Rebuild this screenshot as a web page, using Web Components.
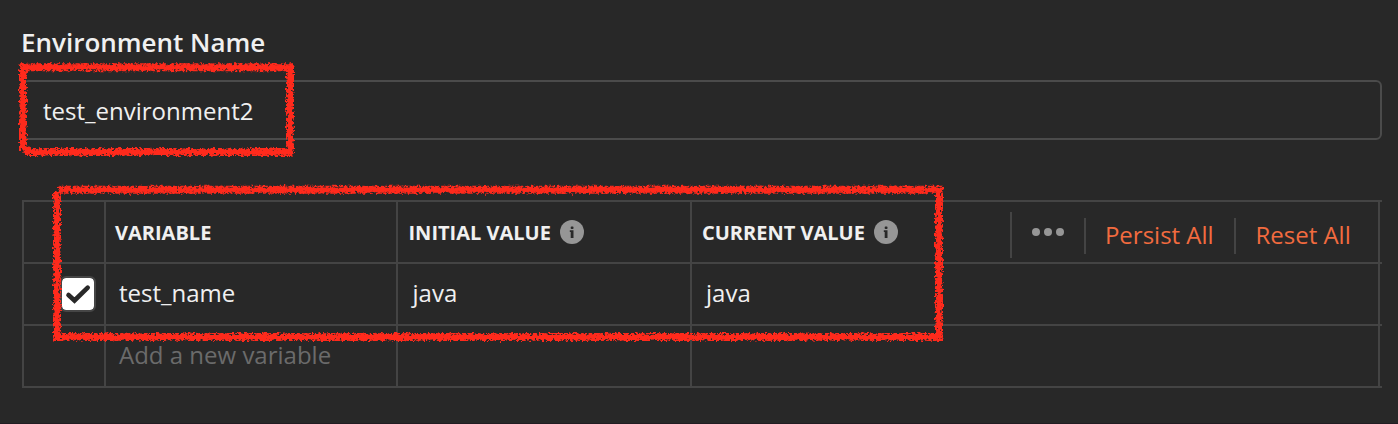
<!DOCTYPE html>
<html lang="en">
<head>
<meta charset="utf-8">
<title>Environment</title>
<style>
html,body{margin:0;height:100%;background:#282828}
body{font-family:"Open Sans","Noto Sans",sans-serif;color:#f0f0f0}
</style>
</head>
<body>
<env-editor></env-editor>
<script>
const define = (name, html) => customElements.define(name, class extends HTMLElement {
  constructor() {
    super();
    const t = document.createElement('template');
    t.innerHTML = html;
    this.attachShadow({mode: 'open'}).append(t.content.cloneNode(true));
  }
});

define('info-icon', `<style>:host{display:block;width:24px;height:24px}svg{display:block}</style>
<svg width="24" height="24" viewBox="0 0 24 24"><circle cx="12" cy="12" r="12" fill="#969696"/><rect x="10.7" y="6.6" width="2.8" height="2.4" rx=".8" fill="#282828"/><path d="M9.8 10.2h3.7V18h-2.8v-6h-.9z" fill="#282828"/></svg>`);

define('check-box', `<style>:host{display:block;box-sizing:border-box;width:36px;height:36px;border:2px solid #464646;border-radius:6px;background:#fff;background-clip:padding-box}svg{display:block}</style>
<svg width="32" height="32" viewBox="0 0 32 32"><path d="M6.5 17L12.5 22.5L25.7 9.6" fill="none" stroke="#282828" stroke-width="4.6" stroke-linecap="round" stroke-linejoin="miter"/></svg>`);

define('name-field', `<style>:host{display:block}
.label{font-size:26px;font-weight:600;line-height:36px;height:36px;white-space:nowrap;margin-left:-1px}
.box{box-sizing:border-box;margin-top:20px;height:60px;border:2px solid #4b4b4b;border-radius:6px;padding:0 19px;font-size:24px;line-height:58px}</style>
<div class="label"><slot name="label"></slot></div><div class="box"><slot></slot></div>`);

define('var-row', `<style>:host{display:grid;grid-template-columns:82px 292px 294px 690px;height:60px;border-top:2px solid #444;width:1360px}
::slotted(*){display:flex;box-sizing:border-box;border-left:2px solid #444}</style><slot></slot>`);

define('var-cell', `<style>:host{align-items:center;min-width:0;padding:0 0 3px calc(13px + var(--shift,0px));font-size:24px;white-space:nowrap}
:host([head]){padding:0 0 0 calc(9px + var(--shift,0px));font-size:20px;font-weight:700;gap:9px}
:host([select]){justify-content:flex-end;padding:0 8px 0 0}
:host([hint]){color:#6b6b6b}
:host([initial]){--shift:1.5px}
:host([last]){border-right:2px solid #444;--shift:1px}</style><slot></slot>`);

define('table-actions', `<style>:host{display:flex;align-items:flex-start;height:60px;margin-left:103px;font-weight:400;font-size:24px;color:#f26b3f}
.more,.act{box-sizing:border-box;border-left:2px solid #444}
.more{width:74px;height:46px;margin-top:10px;padding:16px 0 0 20px}
.act{height:36px;margin-top:16px;line-height:34px;padding-left:19px;width:150px}
.act:last-child{padding-left:19.5px}
svg{display:block}</style>
<div class="more"><svg width="32" height="8" viewBox="0 0 32 8" fill="#969696"><circle cx="4" cy="4" r="4"/><circle cx="16" cy="4" r="4"/><circle cx="28" cy="4" r="4"/></svg></div>
<div class="act">Persist All</div><div class="act">Reset All</div>`);

define('crayon-marks', `<style>:host{position:absolute;left:0;top:0;width:1398px;height:424px;pointer-events:none}svg{display:block}</style>
<svg width="1398" height="424" viewBox="0 0 1398 424">
<defs><filter id="rough" filterUnits="userSpaceOnUse" x="0" y="0" width="1398" height="424" color-interpolation-filters="sRGB">
<feTurbulence type="fractalNoise" baseFrequency=".38" numOctaves="2" seed="7" result="n"/>
<feDisplacementMap in="SourceGraphic" in2="n" scale="4.5" xChannelSelector="R" yChannelSelector="G" result="d"/>
<feColorMatrix in="n" type="matrix" values="0 0 0 0 0  0 0 0 0 0  0 0 0 0 0  0 0 6 0 -1.9" result="holes"/>
<feComposite in="d" in2="holes" operator="in" result="edge"/>
<feMorphology in="SourceGraphic" operator="erode" radius="1.5" result="thin"/>
<feDisplacementMap in="thin" in2="n" scale="4" xChannelSelector="G" yChannelSelector="R" result="core"/>
<feMerge result="m"><feMergeNode in="edge"/><feMergeNode in="core"/></feMerge>
<feGaussianBlur in="m" stdDeviation=".45"/>
</filter></defs>
<g filter="url(#rough)" fill="none" stroke="#ff2a1c" stroke-width="8" stroke-linejoin="miter">
<path d="M19.5 67.3H290V152H25"/><path d="M23 65V150"/><path d="M23 146L28 152"/>
<path d="M58 189.8H939V337H57V192"/>
</g></svg>`);

define('env-editor', `<style>:host{display:block;position:relative;box-sizing:border-box;width:1398px;height:424px;padding:24px 16px 0 22px;border-bottom:1px solid #211c22;background:#282828;overflow:hidden}
.table{margin-top:60px;border-bottom:2px solid #444;width:1360px}</style>
<name-field><span slot="label">Environment Name</span>test_environment2</name-field>
<div class="table">
<var-row><var-cell></var-cell><var-cell head>VARIABLE</var-cell><var-cell head initial>INITIAL VALUE<info-icon></info-icon></var-cell><var-cell head last>CURRENT VALUE<info-icon></info-icon><table-actions></table-actions></var-cell></var-row>
<var-row><var-cell select><check-box></check-box></var-cell><var-cell>test_name</var-cell><var-cell initial>java</var-cell><var-cell last>java</var-cell></var-row>
<var-row><var-cell></var-cell><var-cell hint>Add a new variable</var-cell><var-cell></var-cell><var-cell last></var-cell></var-row>
</div>
<crayon-marks></crayon-marks>`);
</script>
</body>
</html>
